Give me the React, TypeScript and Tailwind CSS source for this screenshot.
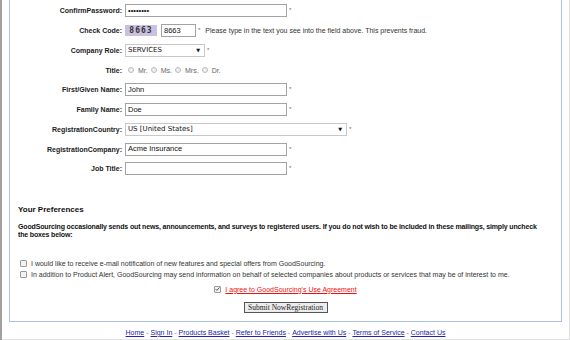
import React from "react";

const Req = () => (
  <span className="ml-[2px] self-start pt-[3px] text-[6px] leading-none text-[#666]">*</span>
);

function Row({ label, children }: { label: string; children: React.ReactNode }) {
  return (
    <div className="flex h-[19.75px] items-center">
      <div className="w-[112px] text-right font-bold text-[#222]">{label}</div>
      <div className="ml-[3px] flex items-center">{children}</div>
    </div>
  );
}

function TextBox({ value, width = "w-[162px]" }: { value?: string; width?: string }) {
  return (
    <div className={`${width} flex h-[13px] items-center border border-[#a3a3a3] bg-white px-[2px] text-[7.5px] text-[#111]`}>
      {value}
    </div>
  );
}

function SelectBox({ value, width }: { value: string; width: string }) {
  return (
    <div className={`${width} flex h-[13px] items-center justify-between border border-[#c8c8c8] bg-white pl-[2px] pr-[4px] font-['DejaVu_Sans',sans-serif] text-[7px] text-[#111]`}>
      <span>{value}</span>
      <span className="text-[5px]">▼</span>
    </div>
  );
}

function Radio({ label }: { label: string }) {
  return (
    <span className="mr-[3px] flex items-center">
      <span className="inline-block h-[6px] w-[6px] rounded-full border border-[#bbb] bg-[#f0f0f0]" />
      <span className="ml-[4px] text-[#666]">{label}</span>
    </span>
  );
}

function Check({ checked }: { checked?: boolean }) {
  return (
    <span className="flex h-[7px] w-[7px] items-center justify-center rounded-[1px] border border-[#9a9a9a] bg-[#f2f2f2]">
      {checked && (
        <svg viewBox="0 0 8 8" className="h-[6px] w-[6px]">
          <path d="M1 4.2 L3 6.2 L7 1.5" fill="none" stroke="#444" strokeWidth="1.4" />
        </svg>
      )}
    </span>
  );
}

const links = ["Home", "Sign In", "Products Basket", "Refer to Friends", "Advertise with Us", "Terms of Service", "Contact Us"];

export default function App() {
  return (
    <div className="flex h-[340px] w-[570px] overflow-hidden bg-white font-['Liberation_Sans',Arial,sans-serif] text-[7px] leading-none text-[#222]">
      <div className="w-[2px] bg-[#a0a0a0]" />
      <div className="flex flex-1 flex-col">
        <div className="mx-[7px] flex flex-col border-x border-b border-[#a9bff0] pt-[1px] pb-[8px]">
          <Row label="ConfirmPassword:">
            <TextBox value="••••••••" />
            <Req />
          </Row>
          <Row label="Check Code:">
            <div className="flex h-[11px] w-[32px] items-center justify-center bg-[#c9c1df] font-['DejaVu_Sans_Mono',monospace] text-[8px] font-bold tracking-[1px] text-[#333]">
              8663
            </div>
            <div className="ml-[4px] flex">
              <TextBox value="8663" width="w-[35px]" />
            </div>
            <Req />
            <span className="ml-[5px] text-[#333]">
              Please type in the text you see into the field above. This prevents fraud.
            </span>
          </Row>
          <Row label="Company Role:">
            <SelectBox value="SERVICES" width="w-[80px]" />
            <Req />
          </Row>
          <Row label="Title:">
            <div className="ml-[3px] flex items-center">
              <Radio label="Mr." />
              <Radio label="Ms." />
              <Radio label="Mrs." />
              <Radio label="Dr." />
            </div>
          </Row>
          <Row label="First/Given Name:">
            <TextBox value="John" />
            <Req />
          </Row>
          <Row label="Family Name:">
            <TextBox value="Doe" />
            <Req />
          </Row>
          <Row label="RegistrationCountry:">
            <SelectBox value="US [United States]" width="w-[222px]" />
            <Req />
          </Row>
          <Row label="RegistrationCompany:">
            <TextBox value="Acme Insurance" />
            <Req />
          </Row>
          <Row label="Job Title:">
            <TextBox />
            <Req />
          </Row>

          <div className="mt-[26px] pl-[8px] text-[8px] leading-[10px] font-bold text-[#111]">Your Preferences</div>
          <p className="mt-[8px] pl-[8px] pr-[4px] leading-[8.5px] font-bold tracking-[-0.15px] text-[#111]">
            <span className="whitespace-nowrap">
              GoodSourcing occasionally sends out news, announcements, and surveys to registered users. If you do not wish to be included in these mailings, simply uncheck
            </span>
            <br />
            the boxes below:
          </p>

          <div className="mt-[18px] flex flex-col pl-[10px] text-[#333]">
            <label className="flex h-[11px] items-center gap-[4px]">
              <Check />
              <span>I would like to receive e-mail notification of new features and special offers from GoodSourcing.</span>
            </label>
            <label className="flex h-[11px] items-center gap-[4px]">
              <Check />
              <span>In addition to Product Alert, GoodSourcing may send information on behalf of selected companies about products or services that may be of interest to me.</span>
            </label>
          </div>

          <div className="mt-[4px] flex h-[11px] items-center justify-center gap-[4px]">
            <Check checked />
            <a className="text-[#f01010] underline">I agree to GoodSourcing's Use Agreement</a>
          </div>

          <div className="mt-[7px] flex justify-center">
            <button className="flex h-[11px] w-[84px] items-center justify-center border border-[#555] bg-[#ececec] font-['Liberation_Serif',serif] text-[7.5px] text-[#222]">
              Submit NowRegistration
            </button>
          </div>
        </div>

        <div className="flex h-[17px] items-center justify-center pt-[4px]">
          {links.map((l, i) => (
            <React.Fragment key={l}>
              {i > 0 && <span className="whitespace-pre text-[#888]"> - </span>}
              <a className="text-[#2424a8] underline">{l}</a>
            </React.Fragment>
          ))}
        </div>
        <div className="h-[1px] bg-[#e2e2e2]" />
      </div>
      <div className="w-[1px] bg-[#dcdcdc]" />
    </div>
  );
}
